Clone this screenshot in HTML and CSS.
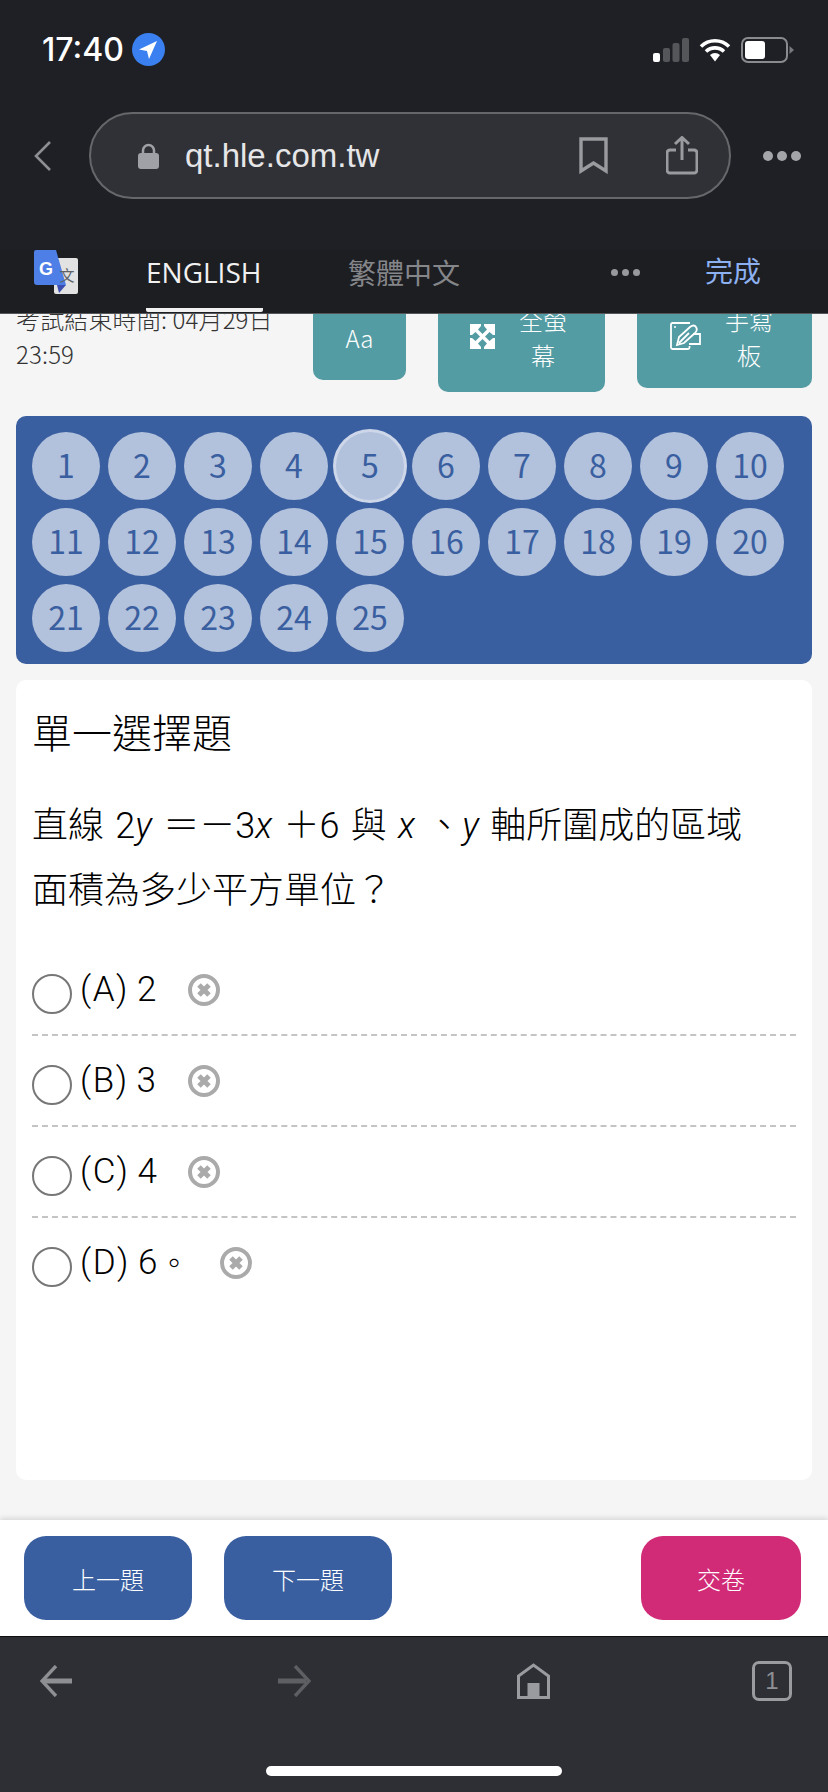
FILE: index.html
```html
<!DOCTYPE html>
<html lang="zh-Hant">

<head>
    <meta charset="UTF-8">
    <meta name="viewport" content="width=device-width, initial-scale=1.0">
    <title>qt.hle.com.tw</title>
    <link rel="stylesheet" href="styles.css">
</head>

<body>
    <div id="phone">
        <header class="chrome">
            <div class="status">
                <div class="status-left">
                    <span class="clock">17:40</span>
                    <svg class="loc" width="33" height="33" viewBox="0 0 33 33"><circle cx="16.5" cy="16.5" r="16.5" fill="#3a80f0"/><path d="M25 8 L7 16.5 L15 18 L17 26 Z" fill="#fff"/></svg>
                </div>
                <div class="status-right">
                    <svg width="36" height="24" viewBox="0 0 36 24"><rect x="0" y="15" width="7" height="9" rx="2" fill="#fff"/><rect x="10" y="10" width="7" height="14" rx="2" fill="#55565a"/><rect x="19.500" y="5" width="7" height="19" rx="2" fill="#55565a"/><rect x="29" y="0" width="7" height="24" rx="2" fill="#55565a"/></svg>
                    <svg width="32" height="24" viewBox="0 0 32 24"><path d="M2 8.500 A20 20 0 0 1 30 8.500 M7 13.500 A13 13 0 0 1 25 13.500" fill="none" stroke="#fff" stroke-width="3.600"/><path d="M11 17 A7.500 7.500 0 0 1 21 17 L16 23.500 Z" fill="#fff"/></svg>
                    <svg width="53" height="26" viewBox="0 0 53 26"><rect x="1" y="1" width="45" height="24" rx="6" fill="none" stroke="#8a8b8f" stroke-width="2"/><rect x="4" y="4" width="20" height="18" rx="3" fill="#fff"/><path d="M48.500 9 L53 13 L48.500 17 Z" fill="#77787c"/></svg>
                </div>
            </div>

            <div class="urlbar">
                <svg width="19" height="30" viewBox="0 0 19 30"><path d="M17 1 L3 15 L17 29" fill="none" stroke="#8e8f93" stroke-width="2.600"/></svg>
                <div class="pill">
                    <svg width="21" height="26" viewBox="0 0 21 26"><path d="M5 12 V7.500 a5.500 5.500 0 0 1 11 0 V12" fill="none" stroke="#a0a1a6" stroke-width="2.500"/><rect x="0" y="10" width="21" height="16" rx="3" fill="#a0a1a6"/></svg>
                    <span class="url">qt.hle.com.tw</span>
                    <svg class="mark" width="29" height="37" viewBox="0 0 29 37"><path d="M2 2 H27 V34 L14.500 26 L2 34 Z" fill="none" stroke="#9a9b9f" stroke-width="3.400"/></svg>
                    <svg class="share" width="32" height="39" viewBox="0 0 32 39"><path d="M10 14 H4 a3 3 0 0 0 -3 3 V34 a3 3 0 0 0 3 3 H28 a3 3 0 0 0 3 -3 V17 a3 3 0 0 0 -3 -3 H22" fill="none" stroke="#9a9b9f" stroke-width="3"/><path d="M16 24 V2 M9 8 L16 1.500 L23 8" fill="none" stroke="#9a9b9f" stroke-width="3"/></svg>
                </div>
                <div class="dots dots-big"><i></i><i></i><i></i></div>
            </div>

            <div class="translate">
                <svg class="gt" width="45" height="45" viewBox="0 0 45 45">
                    <rect x="20" y="8" width="24" height="36" rx="2" fill="#e2e2e2"/>
                    <path d="M0 2 a2 2 0 0 1 2 -2 H22 L32 35 H3 a3 3 0 0 1 -3 -3 Z" fill="#4d7fe6"/>
                    <path d="M23 35 H32 L25 43 Z" fill="#3c4fb0"/>
                    <text x="5" y="25" class="gt-g">G</text>
                    <text x="25.500" y="31" class="gt-wen">文</text>
                </svg>
                <div class="tab tab-on">ENGLISH</div>
                <div class="tab tab-zh">繁體中文</div>
                <div class="dots"><i></i><i></i><i></i></div>
                <div class="done">完成</div>
            </div>
        </header>

        <main class="page">
            <div class="tools">
                <div class="exam-time">考試結束時間: 04月29日 23:59</div>
                <div class="tool tool-font">Aa</div>
                <div class="tool tool-full">
                    <svg width="25" height="25" viewBox="0 0 25 25"><path d="M0 0 H25 V25 H0 Z" fill="#fff"/><path d="M11 0 H14 V2 L17 5.500 L12.500 10 L8 5.500 L11 2 Z M11 25 H14 V23 L17 19.500 L12.500 15 L8 19.500 L11 23 Z M0 11 V14 H2 L5.500 17 L10 12.500 L5.500 8 L2 11 Z M25 11 V14 H23 L19.500 17 L15 12.500 L19.500 8 L23 11 Z" fill="#549ca3"/></svg>
                    <span class="tool-label">全螢幕</span>
                </div>
                <div class="tool tool-write">
                    <svg width="31" height="28" viewBox="0 0 31 28"><path d="M20 1 H2.500 a1.500 1.500 0 0 0 -1.500 1.500 V25.500 a1.500 1.500 0 0 0 1.500 1.500 H18 a1.500 1.500 0 0 0 1.500 -1.500 V24" fill="none" stroke="#fff" stroke-width="1.800"/><path d="M7 23 L9 15 L20 5 Q24 2 26 5 Q28 8 25 11 L14 21 Z M9 21 L19 11 M23 12 H30 V22 H19" fill="none" stroke="#fff" stroke-width="1.800"/><circle cx="5" cy="5" r="1" fill="#fff"/></svg>
                    <span class="tool-label">手寫板</span>
                </div>
            </div>

            <div class="numbers">
                <div class="num">1</div>
                <div class="num">2</div>
                <div class="num">3</div>
                <div class="num">4</div>
                <div class="num num-on">5</div>
                <div class="num">6</div>
                <div class="num">7</div>
                <div class="num">8</div>
                <div class="num">9</div>
                <div class="num">10</div>
                <div class="num">11</div>
                <div class="num">12</div>
                <div class="num">13</div>
                <div class="num">14</div>
                <div class="num">15</div>
                <div class="num">16</div>
                <div class="num">17</div>
                <div class="num">18</div>
                <div class="num">19</div>
                <div class="num">20</div>
                <div class="num">21</div>
                <div class="num">22</div>
                <div class="num">23</div>
                <div class="num">24</div>
                <div class="num">25</div>
            </div>

            <section class="card">
                <h2 class="kind">單一選擇題</h2>
                <p class="question">直線 2<em>y</em> ＝－3<em>x</em> ＋6 與 <em>x</em> 、<em>y</em> 軸所圍成的區域<br>面積為多少平方單位？</p>

                <div class="option">
                    <span class="radio"></span>
                    <span class="opt-text">(A) 2</span>
                    <svg class="strike" width="32" height="32" viewBox="0 0 32 32"><circle cx="16" cy="16" r="14" fill="none" stroke="#aaa" stroke-width="4"/><path d="M11 11 L21 21 M21 11 L11 21" stroke="#aaa" stroke-width="5"/></svg>
                </div>
                <div class="option">
                    <span class="radio"></span>
                    <span class="opt-text">(B) 3</span>
                    <svg class="strike" width="32" height="32" viewBox="0 0 32 32"><circle cx="16" cy="16" r="14" fill="none" stroke="#aaa" stroke-width="4"/><path d="M11 11 L21 21 M21 11 L11 21" stroke="#aaa" stroke-width="5"/></svg>
                </div>
                <div class="option">
                    <span class="radio"></span>
                    <span class="opt-text">(C) 4</span>
                    <svg class="strike" width="32" height="32" viewBox="0 0 32 32"><circle cx="16" cy="16" r="14" fill="none" stroke="#aaa" stroke-width="4"/><path d="M11 11 L21 21 M21 11 L11 21" stroke="#aaa" stroke-width="5"/></svg>
                </div>
                <div class="option option-last">
                    <span class="radio"></span>
                    <span class="opt-text">(D) 6<span class="stop">。</span></span>
                    <svg class="strike" width="32" height="32" viewBox="0 0 32 32"><circle cx="16" cy="16" r="14" fill="none" stroke="#aaa" stroke-width="4"/><path d="M11 11 L21 21 M21 11 L11 21" stroke="#aaa" stroke-width="5"/></svg>
                </div>
            </section>
        </main>

        <div class="actions">
            <button class="btn">上一題</button>
            <button class="btn">下一題</button>
            <button class="btn btn-submit">交卷</button>
        </div>

        <footer class="toolbar">
            <div class="toolbar-icons">
                <svg class="go-back" width="32" height="32" viewBox="0 0 32 32"><path d="M16 1 L2 16 L16 31" fill="none" stroke="#8e8f93" stroke-width="3.400"/><path d="M4 16 H32" stroke="#8e8f93" stroke-width="5"/></svg>
                <svg class="go-next" width="33" height="32" viewBox="0 0 33 32"><path d="M17 1 L31 16 L17 31" fill="none" stroke="#5e5f63" stroke-width="3.400"/><path d="M0 16 H28" stroke="#5e5f63" stroke-width="5"/></svg>
                <svg class="go-home" width="33" height="36" viewBox="0 0 33 36"><path d="M1.500 34.500 V13 L16.500 2 L31.500 13 V34.500 Z" fill="none" stroke="#9a9b9f" stroke-width="3"/><rect x="10.500" y="20" width="12" height="14" fill="#9a9b9f"/></svg>
                <div class="tabs-count">1</div>
            </div>
            <div class="home-bar"></div>
        </footer>
    </div>
</body>

</html>
```

FILE: styles.css
```css
* {
    box-sizing: border-box;
}

body {
    margin: 0;
    background-color: #f5f5f5;
    font-family: "Liberation Sans", "Noto Sans CJK TC", sans-serif;
}

#phone {
    width: 828px;
    height: 1792px;
    display: flex;
    flex-direction: column;
    overflow: hidden;
}

/* browser chrome */
.chrome {
    height: 314px;
    flex: none;
    position: relative;
    z-index: 2;
    background-color: #1f2025;
}

.status {
    height: 100px;
    padding: 33px 34px 0 42px;
    display: flex;
    justify-content: space-between;
    align-items: flex-start;
}

.status-left {
    display: flex;
    align-items: center;
    gap: 8px;
}

.clock {
    color: white;
    font-family: Inter, sans-serif;
    font-size: 32px;
    font-weight: 500;
    line-height: 33px;
}

.status-right {
    display: flex;
    align-items: center;
    gap: 10px;
    padding-top: 4px;
}

.urlbar {
    margin-top: 12px;
    height: 87px;
    padding-left: 33px;
    display: flex;
    align-items: center;
}

.pill {
    width: 642px;
    height: 87px;
    margin-left: 37px;
    padding-left: 47px;
    border: 2px solid #66676b;
    border-radius: 44px;
    background-color: #303136;
    display: flex;
    align-items: center;
}

.url {
    margin-left: 26px;
    width: 394px;
    color: #e6e6e8;
    font-size: 33px;
}

.mark {
    margin-right: 58px;
}

.dots {
    display: flex;
    gap: 4px;
}

.dots i {
    width: 7px;
    height: 7px;
    border-radius: 50%;
    background-color: #98999d;
}

.dots-big {
    margin-left: 32px;
}

.dots-big i {
    width: 10px;
    height: 10px;
    background-color: #a4a5a9;
}

.translate {
    margin-top: 51px;
    height: 64px;
    padding-left: 34px;
    display: flex;
    align-items: flex-start;
    background-color: #1d1e22;
    border-bottom: 1px solid #55565a;
}

.gt-g {
    fill: white;
    font-family: "Liberation Sans", sans-serif;
    font-size: 18px;
    font-weight: bold;
}

.gt-wen {
    fill: #5f6368;
    font-family: "Noto Sans CJK TC", sans-serif;
    font-size: 15px;
}

.tab {
    height: 62px;
    padding-top: 3px;
    font-family: "Open Sans", sans-serif;
    font-size: 28px;
    line-height: 38px;
}

.tab-on {
    margin-left: 67px;
    width: 117px;
    color: #f1f1f1;
    border-bottom: 4px solid #f1f1f1;
    border-radius: 0 0 2px 2px;
    white-space: nowrap;
}

.tab-zh {
    margin-left: 85px;
    color: #85868a;
    font-family: "Noto Sans CJK TC", sans-serif;
}

.translate .dots {
    margin-left: 151px;
    margin-top: 19px;
}

.done {
    margin-left: 65px;
    padding-top: 1px;
    color: #8cb0f0;
    font-family: "Noto Sans CJK TC", sans-serif;
    font-size: 28px;
    line-height: 38px;
}

/* page scrolled a bit under the translate bar */
.page {
    flex: 1;
    min-height: 0;
    margin-top: -19px;
    padding: 0 16px;
}

.tools {
    display: flex;
    align-items: flex-start;
    gap: 32px;
    margin-bottom: 24px;
}

.exam-time {
    width: 265px;
    padding-top: 6px;
    color: #333;
    font-family: "Noto Sans CJK TC", sans-serif;
    font-size: 24px;
    line-height: 35px;
    font-weight: 300;
    letter-spacing: 0.15px;
}

.tool {
    background-color: #549ca3;
    border-radius: 0 0 10px 10px;
    color: white;
    font-family: "Noto Sans CJK TC", sans-serif;
    font-size: 24px;
    line-height: 35px;
    font-weight: 300;
    display: flex;
    align-items: flex-start;
    padding-top: 7px;
}

.tool-font {
    width: 93px;
    height: 85px;
    align-items: center;
    justify-content: center;
    padding-top: 0;
}

.tool-full {
    width: 167px;
    height: 97px;
    padding-left: 32px;
}

.tool-full svg {
    margin-top: 22px;
}

.tool-write {
    width: 175px;
    height: 93px;
    padding-left: 33px;
}

.tool-write svg {
    margin-top: 20px;
}

.tool-label {
    width: 50px;
    margin-left: 23px;
    text-align: center;
}

/* question number panel */
.numbers {
    padding: 16px 16px 12px;
    border-radius: 10px;
    background-color: #3a5fa0;
    display: flex;
    flex-wrap: wrap;
    gap: 8px;
    margin-bottom: 16px;
}

.num {
    width: 68px;
    height: 68px;
    padding-bottom: 5px;
    border-radius: 50%;
    background-color: #b2c1dc;
    color: #3a5fa0;
    font-family: "Noto Sans CJK TC", sans-serif;
    font-size: 32px;
    display: flex;
    align-items: center;
    justify-content: center;
}

.num-on {
    box-shadow: 0 0 0 3px #cdd7e9;
}

.card {
    height: 800px;
    padding: 22px 16px 0;
    border-radius: 10px;
    background-color: white;
    color: black;
    font-family: Roboto, "Noto Sans CJK TC", sans-serif;
    font-weight: 300;
}

.kind {
    margin: 0 0 27px;
    font-size: 40px;
    font-weight: 300;
    line-height: 65px;
}

.question {
    margin: 0 0 21px;
    font-size: 36px;
    line-height: 65px;
    word-spacing: 2.5px;
}

.option {
    height: 91px;
    padding-top: 29px;
    border-bottom: 2px dashed #c4c4c4;
    display: flex;
    align-items: flex-start;
}

.option-last {
    border-bottom: none;
}

.radio {
    width: 40px;
    height: 40px;
    flex: none;
    border: 2px solid #777;
    border-radius: 50%;
    margin-right: 8px;
}

.opt-text {
    font-size: 35px;
    letter-spacing: 1.5px;
    word-spacing: -2px;
    line-height: 32px;
}

.stop {
    font-size: 30px;
}

.strike {
    margin-left: 30px;
}

/* bottom buttons */
.actions {
    height: 116px;
    flex: none;
    padding: 16px 27px 0 24px;
    display: flex;
    gap: 32px;
    position: relative;
    background-color: white;
    box-shadow: 0 -2px 5px rgba(0, 0, 0, 0.12);
}

.btn {
    width: 168px;
    height: 84px;
    border: none;
    border-radius: 22px;
    background-color: #3a5fa0;
    color: white;
    font-family: "Noto Sans CJK TC", sans-serif;
    font-size: 24px;
    font-weight: 300;
}

.btn-submit {
    width: 160px;
    margin-left: auto;
    background-color: #d12a77;
}

.toolbar {
    height: 156px;
    flex: none;
    background-color: #2e2f34;
    border-top: 1px solid #111;
}

.toolbar-icons {
    height: 88px;
    margin-bottom: 41px;
    padding-left: 40px;
    display: flex;
    align-items: center;
}

.go-next {
    margin-left: 206px;
}

.go-home {
    margin-left: 206px;
}

.tabs-count {
    width: 40px;
    height: 40px;
    margin-left: 202px;
    border: 3px solid #9a9b9f;
    border-radius: 7px;
    color: #8e8f93;
    font-size: 24px;
    line-height: 34px;
    text-align: center;
}

.home-bar {
    width: 296px;
    height: 10px;
    margin: 0 auto;
    border-radius: 5px;
    background-color: white;
}
```
